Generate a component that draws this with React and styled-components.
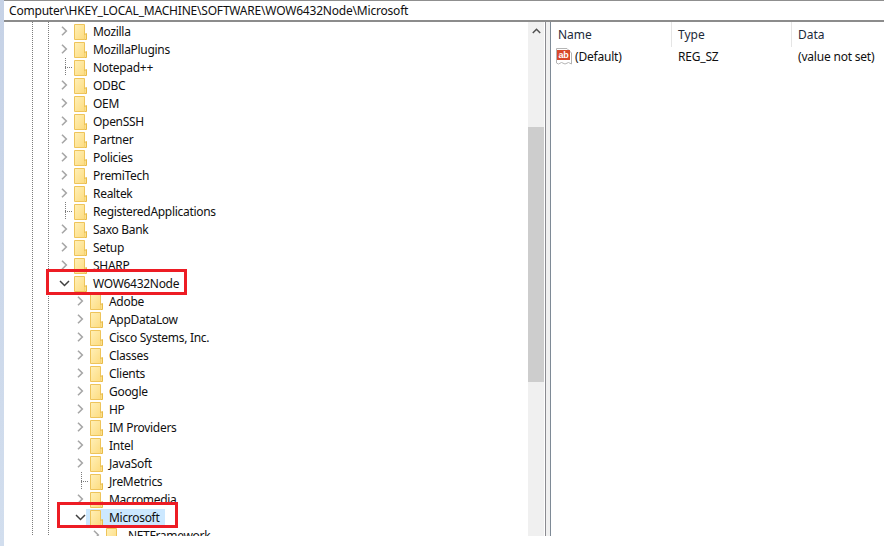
import { createGlobalStyle } from "styled-components";
import styled from "styled-components";

const Global = createGlobalStyle`
  html, body {
    margin: 0;
    padding: 0;
    background: #fff;
  }
  body {
    font-family: "Noto Sans", "Open Sans", sans-serif;
    font-size: 12px;
    color: #101010;
  }
`;

const Screen = styled.div`
  width: 887px;
  height: 546px;
  display: flex;
  overflow: hidden;
  position: relative;
  background: #fff;
`;

const Edge = styled.div`
  width: 4px;
  background: linear-gradient(#c6d2e6, #d2deee);
  flex: none;
`;

const Editor = styled.div`
  width: 880px;
  height: 536px;
  display: flex;
  flex-direction: column;
  flex: none;
`;

const Address = styled.div`
  height: 19px;
  flex: none;
  border-top: 1px solid #8f8f8f;
  border-bottom: 2px solid #8c8c8c;
  padding-left: 5px;
  line-height: 19px;
  white-space: nowrap;
  letter-spacing: -0.2px;
`;

const Panes = styled.div`
  flex: 1;
  min-height: 0;
  display: flex;
`;

const TreePane = styled.div`
  width: 524px;
  flex: none;
  overflow: hidden;
`;

const Row = styled.div`
  height: 18px;
  display: flex;
`;

const Guide = styled.div`
  width: 16px;
  height: 18px;
  flex: none;
  background: repeating-linear-gradient(#7c7c7c 0 1px, transparent 1px 2px) 12px 0 / 1px 100% no-repeat;
`;

const Spacer = styled.div`
  width: ${(p) => p.$width}px;
  flex: none;
`;

const Toggle = styled.div`
  width: 12px;
  height: 18px;
  flex: none;
  display: flex;
  align-items: center;
  justify-content: center;
`;

const Elbow = styled.div`
  width: 14px;
  height: 18px;
  margin-right: -2px;
  flex: none;
  background:
    repeating-linear-gradient(#7c7c7c 0 1px, transparent 1px 2px) 7px 0 / 1px 100% no-repeat,
    repeating-linear-gradient(90deg, #7c7c7c 0 1px, transparent 1px 2px) 7px 9px / 7px 1px no-repeat;
`;

const Entry = styled.div`
  height: 17px;
  margin-top: 1px;
  display: flex;
  align-items: flex-start;
  padding: 0 5px 0 3px;
  background: ${(p) => (p.$selected ? "#cce8ff" : "transparent")};
`;

const Label = styled.span`
  margin-left: 5px;
  white-space: nowrap;
  letter-spacing: -0.3px;
  line-height: 17px;
`;

const Scrollbar = styled.div`
  width: 16px;
  flex: none;
  background: #f0f0f0;
  display: flex;
  flex-direction: column;
  align-items: center;
`;

const ArrowCell = styled.div`
  height: 17px;
  flex: none;
  display: flex;
  align-items: center;
  justify-content: center;
`;

const Thumb = styled.div`
  width: 100%;
  height: 255px;
  margin-top: 88px;
  background: #cdcdcd;
`;

const Splitter = styled.div`
  width: 4px;
  flex: none;
  background: #f0f0f0;
  border-left: 1px solid #8a8a90;
  border-right: 1px solid #7e8a96;
  margin-left: 1px;
`;

const ListPane = styled.div`
  flex: 1;
  min-width: 0;
  overflow: hidden;
`;

const Columns = styled.div`
  display: grid;
  grid-template-columns: 121px 120px 1fr;
`;

const Head = styled.div`
  height: 25px;
  padding-left: ${(p) => (p.$first ? "7px" : "6px")};
  line-height: 25px;
  border-right: ${(p) => (p.$last ? "none" : "1px solid #e5e5e5")};
  color: #1c2a3a;
  box-sizing: border-box;
`;

const Cell = styled.div`
  height: 18px;
  padding-left: ${(p) => (p.$first ? "5px" : "6px")};
  display: flex;
  align-items: center;
  gap: 3px;
  white-space: nowrap;
  letter-spacing: -0.2px;
`;

const Mark = styled.div`
  position: absolute;
  left: ${(p) => p.$x}px;
  top: ${(p) => p.$y}px;
  width: ${(p) => p.$w}px;
  height: ${(p) => p.$h}px;
  border: 3px solid #ed1c24;
  box-sizing: border-box;
`;

const rows = [
  ["Mozilla", 1, "closed"],
  ["MozillaPlugins", 1, "closed"],
  ["Notepad++", 1, "leaf"],
  ["ODBC", 1, "closed"],
  ["OEM", 1, "closed"],
  ["OpenSSH", 1, "closed"],
  ["Partner", 1, "closed"],
  ["Policies", 1, "closed"],
  ["PremiTech", 1, "closed"],
  ["Realtek", 1, "closed"],
  ["RegisteredApplications", 1, "leaf"],
  ["Saxo Bank", 1, "closed"],
  ["Setup", 1, "closed"],
  ["SHARP", 1, "closed"],
  ["WOW6432Node", 1, "open"],
  ["Adobe", 2, "closed"],
  ["AppDataLow", 2, "closed"],
  ["Cisco Systems, Inc.", 2, "closed"],
  ["Classes", 2, "closed"],
  ["Clients", 2, "closed"],
  ["Google", 2, "closed"],
  ["HP", 2, "closed"],
  ["IM Providers", 2, "closed"],
  ["Intel", 2, "closed"],
  ["JavaSoft", 2, "closed"],
  ["JreMetrics", 2, "leaf"],
  ["Macromedia", 2, "closed"],
  ["Microsoft", 2, "open", true],
  [".NETFramework", 3, "closed"],
];

function Folder() {
  return (
    <svg width="15" height="17" viewBox="0 0 15 17">
      <defs>
        <linearGradient id="folderFill" x1="0" y1="0" x2="1" y2="1">
          <stop offset="0" stopColor="#fff0b8" />
          <stop offset="1" stopColor="#fddc80" />
        </linearGradient>
      </defs>
      <path d="M1.5 1.5H11.5V16.5H1.5Z" fill="url(#folderFill)" stroke="#eec45a" />
      <path d="M11.5 11.5L13.5 10.5V16.5H11.5" fill="#fbe08e" stroke="#e8bb48" />
    </svg>
  );
}

function Chevron({ open }) {
  if (open) {
    return (
      <svg width="11" height="7" viewBox="0 0 11 7">
        <path d="M1 1L5.5 5.5L10 1" fill="none" stroke="#404040" strokeWidth="1.5" />
      </svg>
    );
  }
  return (
    <svg width="7" height="10" viewBox="0 0 7 10">
      <path d="M1 0.7L5.3 5L1 9.3" fill="none" stroke="#a6a6a6" strokeWidth="1.6" />
    </svg>
  );
}

function TreeRow({ name, level, kind, selected }) {
  return (
    <Row>
      <Spacer $width={16} />
      <Guide />
      <Guide />
      <Spacer $width={6 + (level - 1) * 16} />
      {kind === "leaf" ? (
        <Elbow />
      ) : (
        <Toggle>
          <Chevron open={kind === "open"} />
        </Toggle>
      )}
      <Entry $selected={selected}>
        <Folder />
        <Label>{name}</Label>
      </Entry>
    </Row>
  );
}

function StringIcon() {
  return (
    <svg width="16" height="17" viewBox="0 0 16 17">
      <path d="M0.5 0.5H11L15.5 5V16L12.5 14.5L9 16L5.5 14.5L2.5 16L0.5 15Z" fill="#fff" stroke="#b4b4b4" />
      <rect x="1" y="2" width="13" height="10" fill="#d8482a" />
      <text x="7.5" y="10" fontSize="9" fontWeight="700" fill="#fff" textAnchor="middle" fontFamily="Liberation Sans, sans-serif">
        ab
      </text>
    </svg>
  );
}

export default function App() {
  return (
    <>
      <Global />
      <Screen>
        <Edge />
        <Editor>
          <Address>Computer\HKEY_LOCAL_MACHINE\SOFTWARE\WOW6432Node\Microsoft</Address>
          <Panes>
            <TreePane>
              {rows.map(([name, level, kind, selected]) => (
                <TreeRow key={name} name={name} level={level} kind={kind} selected={selected} />
              ))}
            </TreePane>
            <Scrollbar>
              <ArrowCell>
                <svg width="9" height="6" viewBox="0 0 9 6">
                  <path d="M0.8 5L4.5 1.3L8.2 5" fill="none" stroke="#505050" strokeWidth="1.5" />
                </svg>
              </ArrowCell>
              <Thumb />
            </Scrollbar>
            <Splitter />
            <ListPane>
              <Columns>
                <Head $first>Name</Head>
                <Head>Type</Head>
                <Head $last>Data</Head>
                <Cell $first>
                  <StringIcon />
                  (Default)
                </Cell>
                <Cell>REG_SZ</Cell>
                <Cell>(value not set)</Cell>
              </Columns>
            </ListPane>
          </Panes>
        </Editor>
        <Mark $x={46} $y={269} $w={141} $h={26} />
        <Mark $x={57} $y={502} $w={121} $h={26} />
      </Screen>
    </>
  );
}
